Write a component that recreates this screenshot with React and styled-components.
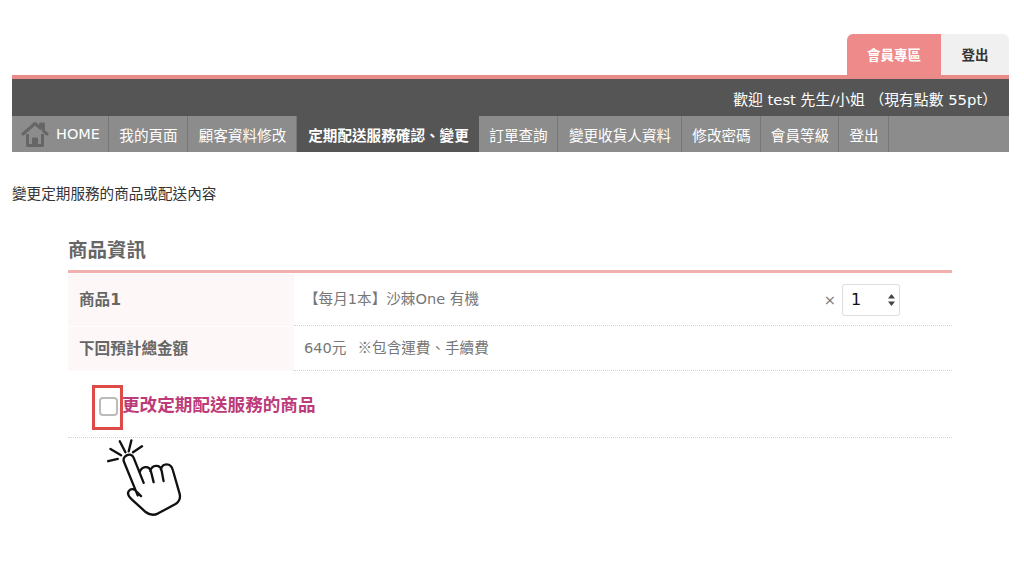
import React from 'react'
import styled, { createGlobalStyle } from 'styled-components'

const GlobalStyle = createGlobalStyle`
  html, body {
    margin: 0;
    background: #fff;
    font-family: "DejaVu Sans", "Noto Sans CJK TC", sans-serif;
  }
`

const Page = styled.div`
  padding: 34px 15px 0 12px;
  height: 543px;
  overflow: hidden;
`

const TopTabs = styled.div`
  display: flex;
  justify-content: flex-end;
  height: 41px;
`

const TopTab = styled.a`
  display: flex;
  align-items: center;
  justify-content: center;
  width: ${(p) => (p.$pink ? '94px' : '68px')};
  padding-bottom: 2px;
  font-size: 13.5px;
  font-weight: bold;
  color: ${(p) => (p.$pink ? '#fff' : '#333')};
  background: ${(p) => (p.$pink ? '#ee8b8a' : '#f0f0f0')};
  border-radius: ${(p) => (p.$pink ? '6px 0 0 0' : '0 6px 0 0')};
`

const Header = styled.div`
  border-top: 4px solid #ea8a89;
`

const Welcome = styled.div`
  height: 37px;
  background: #555;
  color: #fff;
  font-size: 14.8px;
  line-height: 42px;
  text-align: right;
  padding-right: 12px;
  white-space: pre;
`

const Nav = styled.nav`
  display: flex;
  height: 36px;
  background: #8c8c8c;
`

const NavItem = styled.a`
  display: flex;
  align-items: center;
  justify-content: center;
  box-sizing: border-box;
  width: ${(p) => p.$w}px;
  padding-left: 1px;
  font-size: 14.6px;
  white-space: nowrap;
  color: #fff;
  font-weight: ${(p) => (p.$active ? 'bold' : 'normal')};
  background: ${(p) => (p.$active ? '#555' : 'transparent')};
  border-right: ${(p) => (p.$active ? 'none' : '1px solid #777')};
`

const HomeItem = styled(NavItem)`
  justify-content: flex-start;
  gap: 7px;
  padding: 0 0 0 9px;
  font-size: 14.5px;
  & > span {
    margin-top: -1px;
  }
`

const Intro = styled.p`
  margin: 33px 0 0;
  font-size: 14.6px;
  line-height: 18px;
  color: #333;
`

const Section = styled.section`
  margin: 35px 57px 0 56px;
`

const Heading = styled.h2`
  margin: 0;
  height: 32px;
  line-height: 25px;
  font-size: 19.5px;
  font-weight: bold;
  color: #666;
  border-bottom: 3px solid #f2b0af;
`

const Row = styled.div`
  display: flex;
  height: ${(p) => p.$h}px;
  margin-top: 1px;
`

const RowLabel = styled.div`
  display: flex;
  align-items: center;
  box-sizing: border-box;
  width: 226px;
  padding: 0 0 4px 11px;
  background: #fdf8f7;
  font-size: 15.6px;
  font-weight: bold;
  color: #666;
`

const RowValue = styled.div`
  flex: 1;
  display: flex;
  align-items: center;
  justify-content: space-between;
  padding: 0 52px 0 10px;
  border-bottom: 1px dotted #d4d4d4;
  font-size: 14.6px;
  color: #777;
`

const ValueText = styled.span`
  margin-bottom: 4px;
`

const Note = styled.span`
  margin-left: 11px;
  font-family: "Noto Sans CJK TC", sans-serif;
`

const Qty = styled.div`
  display: flex;
  align-items: center;
  gap: 6px;
  color: #777;
`

const SelectWrap = styled.div`
  position: relative;
  display: flex;
`

const Select = styled.select`
  appearance: none;
  box-sizing: border-box;
  width: 58px;
  height: 32px;
  padding: 0 0 0 8px;
  border: 1px solid #ddd;
  border-radius: 3px;
  background: #fff;
  color: #111;
  font-family: inherit;
  font-size: 16px;
`

const SelectArrows = styled.svg`
  position: absolute;
  right: 4px;
  top: 10px;
  pointer-events: none;
`

const ChangeRow = styled.label`
  display: flex;
  align-items: center;
  height: 66px;
  padding-left: 31px;
  border-bottom: 1px dotted #d4d4d4;
  font-size: 17.6px;
  font-weight: bold;
  color: #bd3b78;
`

const ChangeText = styled.span`
  margin-bottom: 2px;
`

const CheckWrap = styled.span`
  position: relative;
  display: flex;
  margin: 5px 4px 0 0;
`

const Check = styled.input`
  appearance: none;
  margin: 0;
  width: 19px;
  height: 19px;
  border: 2px solid #bbb;
  border-radius: 4px;
  background: #fff;
`

const Highlight = styled.span`
  position: absolute;
  left: -7px;
  top: -12px;
  width: 25px;
  height: 39px;
  border: 3px solid #dd4a48;
`

const Pointer = styled.svg`
  display: block;
  margin: 1px 0 0 39px;
`

const navItems = [
  ['我的頁面', 79],
  ['顧客資料修改', 109],
  ['定期配送服務確認、變更', 182, true],
  ['訂單查詢', 79],
  ['變更收貨人資料', 124],
  ['修改密碼', 79],
  ['會員等級', 78],
  ['登出', 50]
]

const HomeIcon = () => (
  <svg width="28" height="28" viewBox="0 0 28 28" fill="none" stroke="#666" strokeLinejoin="round">
    <path d="M2 14 14 3.500l5.500 4.800V4h3v7l3.500 3" strokeWidth="3" strokeLinecap="round" />
    <path d="M6.500 14v11.500h15V14" strokeWidth="3" />
    <path d="M11.500 25v-7h5v7z" fill="#666" strokeWidth="1" />
  </svg>
)

const HandIcon = () => (
  <Pointer
    width="75"
    height="77"
    viewBox="140 188 225 232"
    fill="none"
    stroke="#111"
    strokeWidth="7"
    strokeLinecap="round"
    strokeLinejoin="round"
  >
    <path d="M143 255l29-7M150 218l32 19M178 195l17 33M213 192l-8 33M245 210l-27 18" />
    <path
      d="M232 358 190 255c-5-16 22-30 30-10l30 75
         M238 290c4-20 28-24 34-4l8 32
         M270 285c4-20 30-22 34-2l6 32
         M302 280c4-20 30-22 36 2l20 70c4 14 0 24-12 32l-52 28c-12 6-26 6-38-4l-42-38c-10-10-14-20-8-26 6-8 16-6 24 4l12 12"
    />
  </Pointer>
)

const App = () => (
  <Page>
    <GlobalStyle />
    <TopTabs>
      <TopTab $pink>會員專區</TopTab>
      <TopTab>登出</TopTab>
    </TopTabs>
    <Header>
      <Welcome>歡迎 test 先生/小姐 （現有點數 55pt）</Welcome>
      <Nav>
        <HomeItem $w={97}>
          <HomeIcon />
          <span>HOME</span>
        </HomeItem>
        {navItems.map(([label, w, active]) => (
          <NavItem key={label} $w={w} $active={active}>
            {label}
          </NavItem>
        ))}
      </Nav>
    </Header>
    <Intro>變更定期服務的商品或配送內容</Intro>
    <Section>
      <Heading>商品資訊</Heading>
      <Row $h={52}>
        <RowLabel>商品1</RowLabel>
        <RowValue>
          <ValueText>【每月1本】沙棘One 有機</ValueText>
          <Qty>
            ×
            <SelectWrap>
              <Select defaultValue="1">
                <option value="1">1</option>
                <option value="2">2</option>
              </Select>
              <SelectArrows width="9" height="12" viewBox="0 0 9 12">
                <path d="M4.500 0 8 4.500H1zM4.500 12 1 7.500h7z" fill="#444" />
              </SelectArrows>
            </SelectWrap>
          </Qty>
        </RowValue>
      </Row>
      <Row $h={44}>
        <RowLabel>下回預計總金額</RowLabel>
        <RowValue>
          <ValueText>
            640元<Note>※包含運費、手續費</Note>
          </ValueText>
        </RowValue>
      </Row>
      <ChangeRow>
        <CheckWrap>
          <Check type="checkbox" />
          <Highlight />
        </CheckWrap>
        <ChangeText>更改定期配送服務的商品</ChangeText>
      </ChangeRow>
      <HandIcon />
    </Section>
  </Page>
)

export default App
